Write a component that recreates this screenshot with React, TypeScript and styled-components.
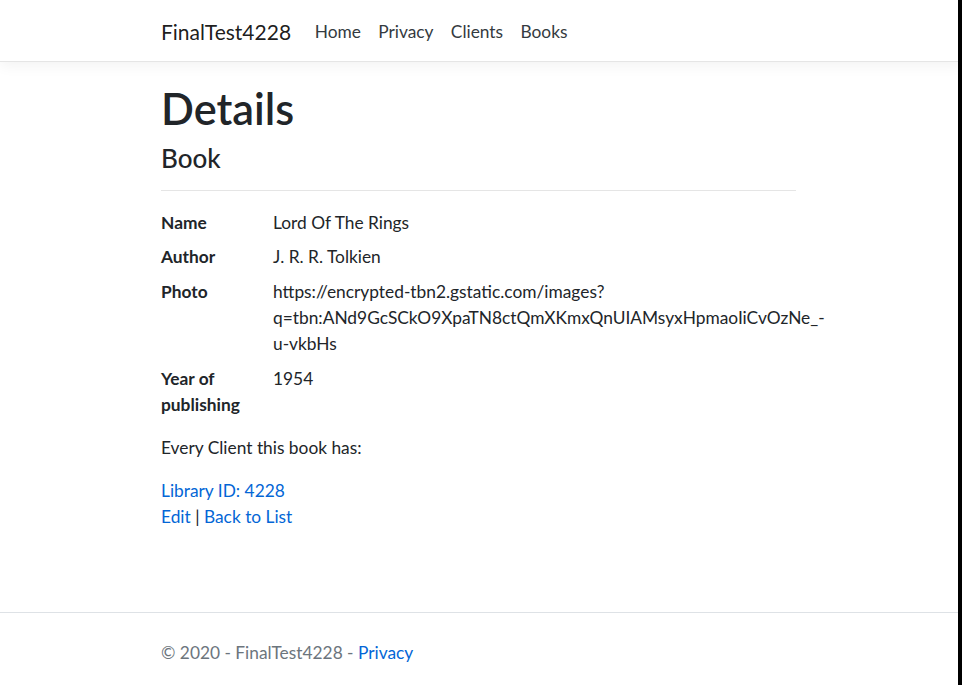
import React from "react";
import styled, { createGlobalStyle } from "styled-components";

const Global = createGlobalStyle`
  html, body { margin: 0; padding: 0; background: #fff; }
  body {
    font-family: "Segoe UI", Lato, "Liberation Sans", sans-serif;
    font-size: 17.33px;
    line-height: 1.5;
    color: #212529;
  }
  * { box-sizing: border-box; }
`;

const Page = styled.div`
  min-height: 685px;
  display: flex;
  flex-direction: column;
`;

const EdgeBar = styled.div`
  position: fixed;
  top: 0;
  right: 0;
  width: 4px;
  height: 100%;
  background: #000;
`;

const Header = styled.header`
  border-bottom: 1px solid #e5e5e5;
  box-shadow: 0 4px 13px rgba(0, 0, 0, 0.05);
  background: #fff;
`;

const Container = styled.div`
  width: 670px;
  margin: 0 auto;
  padding: 0 15px;
`;

const NavInner = styled(Container)`
  height: 61px;
  padding-top: 3px;
  display: flex;
  align-items: center;
`;

const Brand = styled.a`
  font-size: 21px;
  color: rgba(0, 0, 0, 0.9);
  text-decoration: none;
  margin-right: 15px;
  line-height: 1.5;
`;

const NavLink = styled.a`
  font-size: 17.33px;
  color: #343a40;
  text-decoration: none;
  padding: 0 8.67px;
`;

const Main = styled(Container)`
  padding-top: 21px;
  padding-bottom: 17px;
`;

const Title = styled.h1`
  font-size: 43.3px;
  font-weight: 600;
  line-height: 1.2;
  margin: 0 0 7.67px;
`;

const Subtitle = styled.h4`
  font-size: 26px;
  font-weight: 500;
  line-height: 1.2;
  margin: 0 0 8.67px;
`;

const Rule = styled.hr`
  border: 0;
  border-top: 1px solid rgba(0, 0, 0, 0.1);
  margin: 16px 5px 19px 0;
`;

const DL = styled.dl`
  display: grid;
  grid-template-columns: 112px 1fr;
  margin: 0 0 9px;
`;

const DT = styled.dt`
  font-weight: 700;
  margin-bottom: 8.67px;
  line-height: 26px;
`;

const DD = styled.dd`
  margin: 0 0 8.67px;
  line-height: 26px;
  white-space: nowrap;
`;

const Para = styled.p`
  margin: 0 0 17px;
  line-height: 26px;
`;

const Link = styled.a`
  color: #0366d6;
  text-decoration: none;
`;

const Footer = styled.footer`
  margin-top: auto;
  border-top: 1px solid #dee2e6;
  height: 73px;
  display: flex;
  align-items: center;
  color: #6c757d;
`;

const FooterInner = styled(Container)`
  padding-top: 8px;
`;

export default function App() {
  return (
    <>
      <Global />
      <Page>
        <Header>
          <NavInner>
            <Brand href="#">FinalTest4228</Brand>
            <NavLink href="#">Home</NavLink>
            <NavLink href="#">Privacy</NavLink>
            <NavLink href="#">Clients</NavLink>
            <NavLink href="#">Books</NavLink>
          </NavInner>
        </Header>
        <Main>
          <Title>Details</Title>
          <Subtitle>Book</Subtitle>
          <Rule />
          <DL>
            <DT>Name</DT>
            <DD>Lord Of The Rings</DD>
            <DT>Author</DT>
            <DD>J. R. R. Tolkien</DD>
            <DT>Photo</DT>
            <DD>
              https://encrypted-tbn2.gstatic.com/images?
              <br />
              q=tbn:ANd9GcSCkO9XpaTN8ctQmXKmxQnUIAMsyxHpmaoIiCvOzNe_-
              <br />
              u-vkbHs
            </DD>
            <DT>
              Year of
              <br />
              publishing
            </DT>
            <DD>1954</DD>
          </DL>
          <Para>Every Client this book has:</Para>
          <div>
            <Link href="#">Library ID: 4228</Link>
          </div>
          <div>
            <Link href="#">Edit</Link> | <Link href="#">Back to List</Link>
          </div>
        </Main>
        <Footer>
          <FooterInner>
            © 2020 - FinalTest4228 - <Link href="#">Privacy</Link>
          </FooterInner>
        </Footer>
      </Page>
      <EdgeBar />
    </>
  );
}
